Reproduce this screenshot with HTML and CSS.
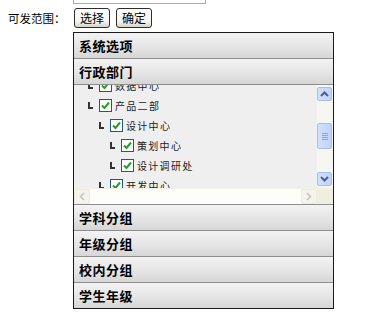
FILE: index.html
```html
<!DOCTYPE html>
<html lang="zh-CN">
<head>
  <meta charset="UTF-8">
  <meta name="viewport" content="width=device-width, initial-scale=1.0">
  <title>可发范围</title>
  <link rel="stylesheet" href="styles.css">
</head>
<body>
  <div class="stub"></div>
  <div class="toolbar">
    <span class="label">可发范围：</span>
    <button class="btn">选择</button>
    <button class="btn">确定</button>
  </div>
  <div class="panel">
    <div class="head first">系统选项</div>
    <div class="head">行政部门</div>
    <div class="tree">
      <div class="tree-main">
        <div class="tree-view">
          <ul class="nodes">
            <li class="lv1"><span class="elbow"></span><span class="cb"></span><span class="txt">数据中心</span></li>
            <li class="lv1"><span class="elbow"></span><span class="cb"></span><span class="txt">产品二部</span></li>
            <li class="lv2"><span class="elbow"></span><span class="cb"></span><span class="txt">设计中心</span></li>
            <li class="lv3"><span class="elbow"></span><span class="cb"></span><span class="txt">策划中心</span></li>
            <li class="lv3"><span class="elbow"></span><span class="cb"></span><span class="txt">设计调研处</span></li>
            <li class="lv2"><span class="elbow"></span><span class="cb"></span><span class="txt">开发中心</span></li>
          </ul>
        </div>
        <div class="vbar">
          <div class="sbtn up"><svg width="9" height="6" viewBox="0 0 9 6"><path d="M1 5 L4.5 1.5 L8 5" fill="none" stroke="#4d6185" stroke-width="2"/></svg></div>
          <div class="vtrack">
            <div class="thumb"><i></i><i></i><i></i><i></i></div>
          </div>
          <div class="sbtn down"><svg width="9" height="6" viewBox="0 0 9 6"><path d="M1 1 L4.5 4.5 L8 1" fill="none" stroke="#4d6185" stroke-width="2"/></svg></div>
        </div>
      </div>
      <div class="hrow">
        <div class="hbar">
          <div class="hbtn"><svg width="6" height="9" viewBox="0 0 6 9"><path d="M5 1 L1.5 4.5 L5 8" fill="none" stroke="#c9c7ba" stroke-width="1.6"/></svg></div>
          <div class="htrack"></div>
          <div class="hbtn"><svg width="6" height="9" viewBox="0 0 6 9"><path d="M1 1 L4.5 4.5 L1 8" fill="none" stroke="#c9c7ba" stroke-width="1.6"/></svg></div>
        </div>
        <div class="corner"></div>
      </div>
    </div>
    <div class="head">学科分组</div>
    <div class="head">年级分组</div>
    <div class="head">校内分组</div>
    <div class="head">学生年级</div>
  </div>
</body>
</html>
```

FILE: styles.css
```css
body {
  margin: 0;
  font-family: "Liberation Sans", "Noto Sans CJK SC", sans-serif;
  font-size: 12px;
  color: #000;
  background: #fff;
}
.stub {
  width: 131px;
  height: 3px;
  margin-left: 73px;
  border: 1px solid #a5acb5;
  border-top: none;
}
.toolbar {
  display: flex;
  align-items: center;
  height: 20px;
  margin-top: 4px;
}
.label {
  flex-shrink: 0;
  width: 74px;
  padding-left: 8px;
  box-sizing: border-box;
  white-space: nowrap;
  font-family: "Noto Sans CJK SC", sans-serif;
  font-size: 11.5px;
}
.btn {
  width: 36px;
  height: 20px;
  margin: 0 6px 0 0;
  padding: 0;
  font-family: "Noto Sans CJK SC", sans-serif;
  font-size: 12px;
  line-height: 18px;
  color: #000;
  border: 1px solid #2d2d2d;
  border-radius: 3px;
  background: linear-gradient(#ffffff, #f3f3ef 70%, #d6d3c8);
}
.panel {
  width: 259px;
  margin: 4px 0 0 73px;
  border: 1px solid #1a1a1a;
}
.head {
  height: 25px;
  line-height: 25px;
  padding-left: 5px;
  font-family: "Noto Sans CJK SC", sans-serif;
  font-size: 13px;
  font-weight: bold;
  letter-spacing: 0.5px;
  border-top: 1px solid #8e8e8e;
  background: linear-gradient(#f3f3f3, #e4e4e4 60%, #d6d6d6);
}
.head.first {
  border-top: none;
}
.tree {
  border-top: 1px solid #8e8e8e;
  background: #efefef;
}
.tree-main {
  display: flex;
  height: 103px;
}
.tree-view {
  flex: 1;
  overflow: hidden;
}
.nodes {
  list-style: none;
  margin: -10px 0 0;
  padding: 0;
}
.nodes li {
  display: flex;
  align-items: center;
  height: 20px;
}
.lv1 { padding-left: 14px; }
.lv2 { padding-left: 25px; }
.lv3 { padding-left: 36px; }
.elbow {
  width: 5px;
  height: 7px;
  margin-right: 6px;
  border-left: 2px solid #333;
  border-bottom: 2px solid #333;
  box-sizing: border-box;
}
.cb {
  width: 13px;
  height: 13px;
  box-sizing: border-box;
  border: 1px solid #1f5a7a;
  background: #fff url("data:image/svg+xml,%3Csvg xmlns='http://www.w3.org/2000/svg' width='11' height='11'%3E%3Cpath d='M2 5.5 L4.5 8 L9 2.5' fill='none' stroke='%2321a121' stroke-width='2'/%3E%3C/svg%3E") no-repeat center;
}
.txt {
  margin-left: 3px;
  font-family: "Noto Sans CJK SC", sans-serif;
  font-size: 10px;
  letter-spacing: 1.3px;
  color: #222;
}
.vbar {
  width: 16px;
  display: flex;
  flex-direction: column;
  background: #f7f7f1;
  padding: 2px 0 2px 0;
  box-sizing: border-box;
}
.sbtn, .thumb {
  width: 15px;
  box-sizing: border-box;
  border: 1px solid #a9bde8;
  border-radius: 2px;
  background: linear-gradient(90deg, #d2e0fd, #c1d3fb);
}
.sbtn {
  height: 14px;
  display: flex;
  align-items: center;
  justify-content: center;
}
.vtrack {
  flex: 1;
  padding-top: 22px;
}
.thumb {
  height: 26px;
  display: flex;
  flex-direction: column;
  align-items: center;
  justify-content: center;
  gap: 1px;
}
.thumb i {
  display: block;
  width: 6px;
  height: 1px;
  background: #8fa6d8;
}
.hrow {
  display: flex;
  height: 16px;
}
.hbar {
  flex: 1;
  display: flex;
  background: #fdfdfa;
  border-top: 1px solid #f3f1e4;
}
.hbtn {
  width: 16px;
  display: flex;
  align-items: center;
  justify-content: center;
  border: 1px solid #eeece2;
  border-radius: 2px;
  background: #f4f3ec;
  box-sizing: border-box;
}
.htrack {
  flex: 1;
}
.corner {
  width: 16px;
  background: #efeedf;
}
```
